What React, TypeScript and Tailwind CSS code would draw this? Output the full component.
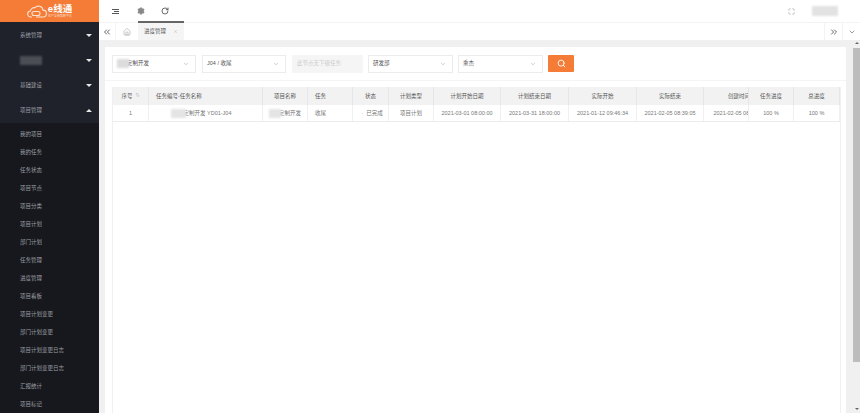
import { ChevronDown, ChevronsLeft, ChevronsRight, Home, Maximize, RotateCw, Search, Settings, X } from "lucide-react";

const subMenus = [
  "我的项目",
  "我的任务",
  "任务状态",
  "项目节点",
  "项目分类",
  "项目计划",
  "部门计划",
  "任务管理",
  "进度管理",
  "项目看板",
  "项目计划变更",
  "部门计划变更",
  "项目计划变更日志",
  "部门计划变更日志",
  "汇报统计",
  "项目标记",
];

const Blur = ({ className }: { className: string }) => (
  <span className={`relative inline-block shrink-0 blur-[1px] ${className}`} />
);

const Caret = ({ up }: { up?: boolean }) => (
  <span
    className={`h-0 w-0 border-x-[3px] border-x-transparent ${
      up ? "border-b-[3px] border-b-[#e8e8e8]" : "border-t-[3px] border-t-[#e8e8e8]"
    }`}
  />
);

const TopMenu = ({ label, blur, up }: { label?: string; blur?: boolean; up?: boolean }) => (
  <div className="flex h-[25px] items-center justify-between pl-[20px] pr-[7px] text-[#9b9ea3]">
    {blur ? <Blur className="h-[9px] w-[22px] bg-[#4c4e55]" /> : <span>{label}</span>}
    <Caret up={up} />
  </div>
);

const Sidebar = () => (
  <aside className="flex h-full w-[99px] shrink-0 flex-col overflow-hidden bg-[#1f222b] text-[5.5px]">
    <div className="flex h-[22px] shrink-0 items-center justify-center gap-[1px] bg-[#f47c37] text-white">
      <svg width="20" height="14" viewBox="0 0 20 14" fill="none" stroke="#fbe3d4" strokeWidth="1.1">
        <path d="M5 13H4a3 3 0 0 1-.6-6A4 4 0 0 1 8 3.7 4.6 4.6 0 0 1 16 6.1a3.4 3.4 0 0 1 0 6.9H9" />
        <rect x="5" y="7.5" width="8" height="4" rx="2" />
      </svg>
      <div className="flex flex-col items-center leading-none">
        <span className="text-[9.5px] font-bold">e线通</span>
        <span className="mt-[1px] text-[3px] text-[#fbd9c4]">生产全链路数字化</span>
      </div>
    </div>
    <div className="h-[1px] shrink-0" />
    <div className="flex flex-col">
      <TopMenu label="系统管理" />
      <TopMenu blur />
      <TopMenu label="基础建设" />
      <TopMenu label="项目管理" up />
    </div>
    <div className="flex flex-1 flex-col bg-[#17181d] pt-[2px]">
      {subMenus.map((item) => (
        <div key={item} className="flex h-[18px] shrink-0 items-center pl-[20px] text-[#9b9ea3]">
          {item}
        </div>
      ))}
    </div>
  </aside>
);

const FilterSelect = ({ children, width }: { children: React.ReactNode; width: string }) => (
  <div className={`flex h-[18px] items-center justify-between border border-[#ececec] bg-white pl-[4px] pr-[6px] text-[5.5px] text-[#555] ${width}`}>
    <span className="flex items-center">{children}</span>
    <ChevronDown size={6} strokeWidth={2} className="text-[#999]" />
  </div>
);

const columns = [
  { w: "w-[36px]", title: "序号", value: "1" },
  { w: "w-[114px]", title: "任务编号-任务名称", value: "code" },
  { w: "w-[45px]", title: "项目名称", value: "project" },
  { w: "w-[45px]", title: "任务", value: "收尾" },
  { w: "w-[36px]", title: "状态", value: "已完成" },
  { w: "w-[45px]", title: "计划类型", value: "项目计划" },
  { w: "w-[67px]", title: "计划开始日期", value: "2021-03-01 08:00:00" },
  { w: "w-[68px]", title: "计划结束日期", value: "2021-03-31 18:00:00" },
  { w: "w-[68px]", title: "实际开始", value: "2021-01-12 09:46:34" },
  { w: "w-[67px]", title: "实际结束", value: "2021-02-05 08:39:05" },
  { w: "w-[45px]", title: "创建时间", value: "2021-02-05 08:39:05" },
  { w: "w-[45px]", title: "任务进度", value: "100 %" },
  { w: "w-[46px]", title: "总进度", value: "100 %" },
];

const cellValue = (value: string) => {
  if (value === "code") {
    return (
      <span className="flex items-center pr-[9px]">
        <Blur className="-mr-[2px] h-[9px] w-[15px] bg-[#e4e4e4]" />
        定制开发 YD01-J04
      </span>
    );
  }
  if (value === "project") {
    return (
      <span className="flex items-center">
        <Blur className="-mr-[2px] h-[9px] w-[12px] bg-[#e4e4e4]" />
        定制开发
      </span>
    );
  }
  if (value === "已完成") {
    return (
      <span className="flex items-center pl-[4px]">
        <span className="mr-[3px] h-[1px] w-[1px] rounded-full bg-[#ccc]" />
        已完成
      </span>
    );
  }
  return value;
};

const isLeft = (title: string) => title === "任务" || title === "任务编号-任务名称";

const ProgressTable = () => (
  <div className="flex flex-1 flex-col border-x border-[#f0f0f0]">
    <div className="flex h-[18px] shrink-0 bg-[#f2f2f2] text-[5.5px] text-[#555]">
      {columns.map((col) => (
        <div
          key={col.title}
          className={`flex shrink-0 items-center overflow-hidden border-r border-[#e6e6e6] whitespace-nowrap ${col.w} ${
            isLeft(col.title) || col.title === "创建时间" ? "justify-start" : "justify-center"
          } ${isLeft(col.title) ? "pl-[7px]" : ""}`}
        >
          {col.title === "创建时间" ? (
            <span className="w-[70px] shrink-0 text-center">{col.title}</span>
          ) : (
            col.title
          )}
          {col.title === "序号" && <span className="ml-[3px] text-[4px] text-[#aaa]">⇅</span>}
        </div>
      ))}
    </div>
    <div className="flex h-[17px] shrink-0 border-b border-[#ececec] text-[5.5px] text-[#777]">
      {columns.map((col) => (
        <div
          key={col.title}
          className={`flex shrink-0 items-center overflow-hidden border-r border-[#f0f0f0] whitespace-nowrap ${col.w} ${
            col.title === "任务" || col.title === "创建时间" ? "justify-start" : "justify-center"
          } ${col.title === "任务" ? "pl-[7px]" : ""}`}
        >
          {col.title === "创建时间" ? (
            <span className="w-[70px] shrink-0 text-center">{col.value}</span>
          ) : (
            cellValue(col.value)
          )}
        </div>
      ))}
    </div>
  </div>
);

export default function App() {
  return (
    <div
      className="flex h-[413px] w-[860px] overflow-hidden bg-[#f0f0f0]"
      style={{ fontFamily: '"Liberation Sans", "Noto Sans CJK SC", sans-serif' }}
    >
      <Sidebar />
      <main className="flex min-w-0 flex-1 flex-col">
        <header className="flex h-[22px] shrink-0 items-center bg-white pl-[13px] text-[#555]">
          <div className="flex w-[25px] flex-col gap-[1px]">
            <span className="h-[1px] w-[7px] bg-[#555]" />
            <span className="ml-[2px] h-[1px] w-[5px] bg-[#555]" />
            <span className="h-[1px] w-[7px] bg-[#555]" />
          </div>
          <Settings size={8} strokeWidth={3} className="mr-[16px] fill-[#888] text-[#888]" />
          <RotateCw size={8} strokeWidth={2.4} className="text-[#444]" />
          <div className="ml-auto flex items-center gap-[17px] pr-[22px]">
            <Maximize size={7} strokeWidth={2} className="text-[#999]" />
            <Blur className="h-[10px] w-[26px] bg-[#e2e2e2]" />
          </div>
        </header>
        <nav className="flex h-[18px] shrink-0 items-center border-t border-[#f3f3f3] bg-white text-[#666]">
          <div className="flex h-full w-[17px] items-center justify-center border-r border-[#f3f3f3]">
            <ChevronsLeft size={10} strokeWidth={2.4} />
          </div>
          <div className="flex h-full w-[22px] items-center justify-center">
            <Home size={8} strokeWidth={1.6} className="text-[#999]" />
          </div>
          <div className="-mt-[2px] flex h-[19px] w-[46px] items-center justify-between border-t-2 border-[#666] bg-[#f5f5f5] px-[6px] text-[5.5px] text-[#555]">
            进度管理
            <X size={5} strokeWidth={1.6} className="text-[#aaa]" />
          </div>
          <div className="ml-auto flex h-full w-[18px] items-center justify-center border-l border-[#f3f3f3]">
            <ChevronsRight size={10} strokeWidth={2.4} />
          </div>
          <div className="flex h-full w-[18px] items-center justify-center border-l border-[#f3f3f3]">
            <ChevronDown size={8} strokeWidth={2} />
          </div>
        </nav>
        <div className="flex min-h-0 flex-1 pl-[6px]">
          <section className="mt-[7px] flex w-[741px] shrink-0 flex-col bg-white px-[7px]">
            <div className="-mx-[7px] flex h-[34px] shrink-0 items-center gap-[5px] border-b border-[#f5f5f5] px-[7px] pb-[7px] pt-[7px]">
              <FilterSelect width="mr-[1px] w-[84px]">
                <Blur className="-mr-[2px] h-[9px] w-[12px] bg-[#dcdcdc]" />
                定制开发
              </FilterSelect>
              <FilterSelect width="mr-[1px] w-[84px]">J04 / 收尾</FilterSelect>
              <div className="flex h-[18px] w-[71px] items-center bg-[#f5f5f5] pl-[5px] text-[5.5px] text-[#ccc]">
                此节点无下级任务
              </div>
              <FilterSelect width="w-[85px]">研发部</FilterSelect>
              <FilterSelect width="w-[85px]">熏杰</FilterSelect>
              <button className="flex h-[17px] w-[26px] items-center justify-center rounded-[1px] bg-[#f47c37] text-white">
                <Search size={9} strokeWidth={2.4} />
              </button>
            </div>
            <div className="mt-[6px] flex min-h-0 flex-1">
              <ProgressTable />
            </div>
          </section>
          <div className="ml-auto flex w-[7px] flex-col items-center bg-[#f0f0f0] pb-[3px] pt-[2px]">
            <span className="h-0 w-0 border-x-[2px] border-b-[2px] border-x-transparent border-b-[#666]" />
            <span className="mt-[4px] h-[314px] w-full bg-[#bdbdbd]" />
            <span className="mt-auto h-0 w-0 border-x-[2px] border-t-[2px] border-x-transparent border-t-[#666]" />
          </div>
        </div>
      </main>
    </div>
  );
}
